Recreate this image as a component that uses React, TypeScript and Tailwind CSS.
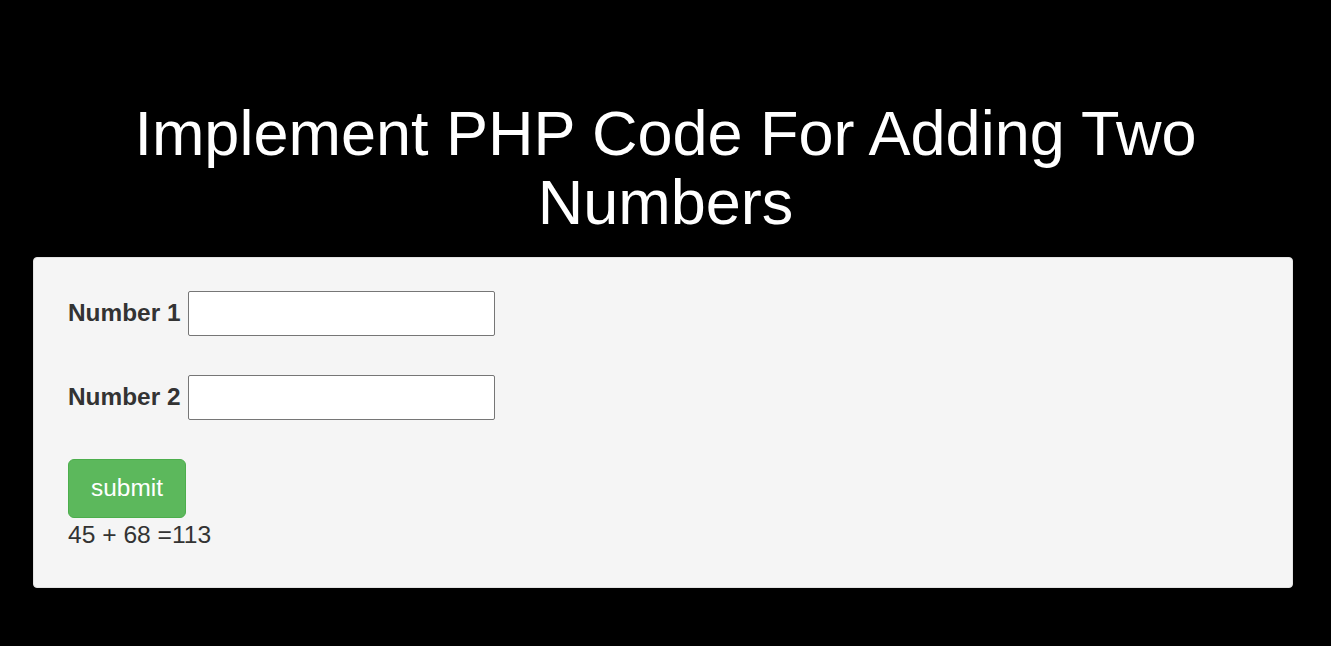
const fields = [
  { id: "num1", label: "Number 1" },
  { id: "num2", label: "Number 2" },
];

export default function App() {
  return (
    <div className="min-h-[646px] bg-black font-['Liberation_Sans',Arial,sans-serif] pt-[99px]">
      <h1 className="text-center text-white text-[63px] leading-[1.1] font-normal px-[120px]">
        Implement PHP Code For Adding Two Numbers
      </h1>

      {/* Form well */}
      <div className="mt-[19px] ml-[33px] w-[1260px] bg-[#f5f5f5] border border-[#e3e3e3] rounded-[4px] pt-[33px] pb-[35px] px-[34px]">
        <form className="flex flex-col gap-[39px]" onSubmit={(e) => e.preventDefault()}>
          {fields.map((field) => (
            <div key={field.id} className="flex items-center gap-[7px]">
              <label htmlFor={field.id} className="text-[24.4px] font-bold text-[#333]">
                {field.label}
              </label>
              <input
                id={field.id}
                type="text"
                className="w-[307px] h-[45px] bg-white border border-[#767676] rounded-[2px] px-2 text-[24px]"
              />
            </div>
          ))}
          <div>
            <button
              type="submit"
              className="w-[118px] h-[59px] bg-[#5cb85c] border border-[#4cae4c] rounded-[6px] text-white text-[24.4px]"
            >
              submit
            </button>
            <p className="text-[24.6px] leading-[34px] text-[#333]">45 + 68 =113</p>
          </div>
        </form>
      </div>
    </div>
  );
}
